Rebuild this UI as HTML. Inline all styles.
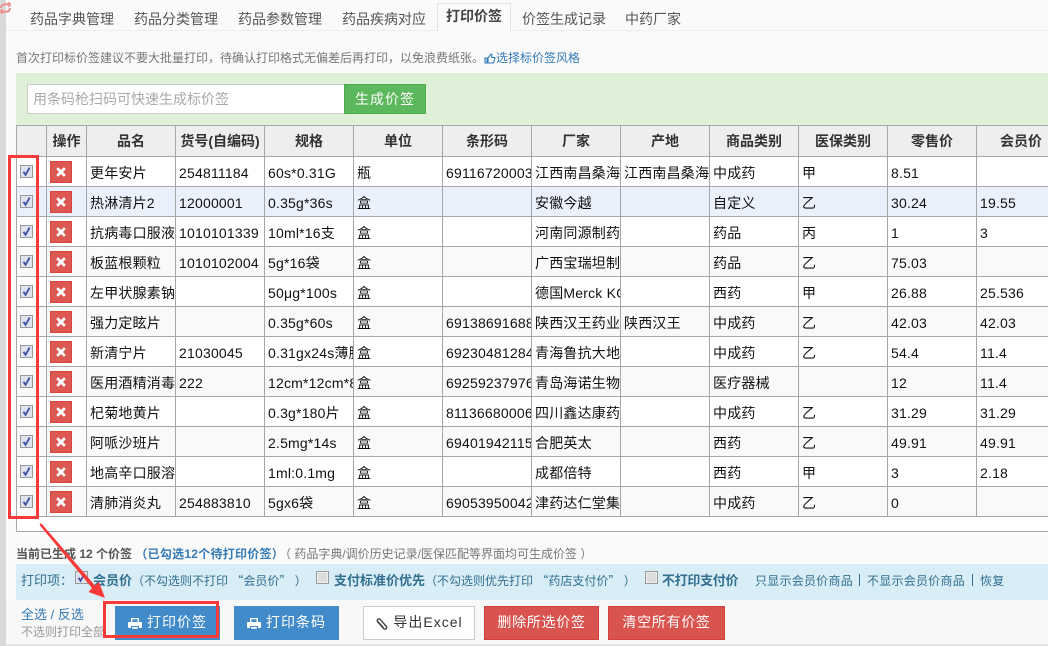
<!DOCTYPE html>
<html lang="zh"><head><meta charset="utf-8"><title>打印价签</title>
<style>
*{box-sizing:border-box}
html,body{margin:0;padding:0}
body{width:1048px;height:646px;overflow:hidden;position:relative;background:#fafafa;font-family:"Liberation Sans","Noto Sans CJK SC",sans-serif;font-size:14px;color:#333}
.a{position:absolute;white-space:nowrap}
.tab{top:9px;height:20px;line-height:20px;font-size:14px;color:#555}
table{position:absolute;left:16px;top:125px;border-collapse:collapse;table-layout:fixed;width:1049px;background:#fff}
th,td{border:1px solid #a6a6a6;overflow:hidden;white-space:nowrap;padding:2px 0 0 3px;font-size:14px;height:30px;text-align:left;color:#111;font-weight:normal;letter-spacing:.2px}
th{height:31px;background:#eee;text-align:center;font-weight:bold;color:#333;padding:0;letter-spacing:0}
tr.s td{background:#f9f9f9}
tr.h td{background:#eaf1fd}
td.c,td.d{padding:0;position:relative}
.cb{position:absolute;left:3px;top:8px;width:13px;height:13px}
.x{position:absolute;left:3px;top:4px;width:22px;height:22px}
.btn{top:606px;height:34px;line-height:33px;text-align:center;font-size:14px;color:#fff}
.lnk{color:#31708f;font-size:12px;letter-spacing:.25px}
.q{font-family:"Noto Sans CJK SC",sans-serif}
</style></head><body>
<svg width="0" height="0" style="position:absolute"><defs>
<symbol id="ck" viewBox="0 0 13 13"><rect x=".5" y=".5" width="12" height="12" fill="#dfe3ee" stroke="#9a9a9a"/><path d="M3.5 6.8L5.6 9.8 9.6 2.6" fill="none" stroke="#3d4f9f" stroke-width="1.8"/></symbol>
<symbol id="ub" viewBox="0 0 13 13"><rect x=".5" y=".5" width="12" height="12" fill="#eee" stroke="#9a9a9a"/><rect x="2" y="2" width="9" height="9" fill="#dcdcdc"/></symbol>
<symbol id="dl" viewBox="0 0 22 22"><rect x=".5" y=".5" width="21" height="21" fill="#dd5753" stroke="#d9443f"/><path d="M8 8L14 14M14 8L8 14" stroke="#fff" stroke-width="2.8" stroke-linecap="round"/></symbol>
<symbol id="pr" viewBox="0 0 14 12"><path d="M3 0h8v4h2.2q.8 0 .8 1v4q0 1-1 1h-2V8H3v2H1q-1 0-1-1V5q0-1 .8-1H3zM4.4 1.3V4h5.2V1.3zM4.2 9h5.6v1.7H4.2z" fill="#fff" fill-rule="evenodd"/></symbol>
</defs></svg>

<div class="a" style="left:0;top:0;width:6px;height:646px;background:#d9d9d9"></div>
<svg class="a" style="left:0;top:2px" width="11" height="12" viewBox="0 0 11 12"><path d="M.8 6Q1.500 2 5.500 2.200H8.500M8 .5L10.500 2.500 8 4.500M10.200 6Q9.500 10 5.500 9.800H2.500M3 7.500L.5 9.500 3 11.500" fill="none" stroke="#ec8f8f" stroke-width="2"/></svg>

<div class="a" style="left:6px;top:30px;width:1042px;height:1px;background:#eee"></div>
<div class="a tab" style="left:30px">药品字典管理</div>
<div class="a tab" style="left:134px">药品分类管理</div>
<div class="a tab" style="left:238px">药品参数管理</div>
<div class="a tab" style="left:342px">药品疾病对应</div>
<div class="a" style="left:437px;top:3px;width:74px;height:28px;background:#fafafa;border:1px solid #e2e2e2;border-bottom:0;text-align:center;line-height:25px;font-weight:bold;color:#444">打印价签</div>
<div class="a tab" style="left:522px">价签生成记录</div>
<div class="a tab" style="left:625px">中药厂家</div>

<div class="a" style="left:16px;top:50px;font-size:12px;line-height:16px;color:#777">首次打印标价签建议不要大批量打印，待确认打印格式无偏差后再打印，以免浪费纸张。</div>
<svg class="a" style="left:484px;top:53px" width="12" height="11" viewBox="0 0 12 11"><path d="M1 5h2v5H1zM4 5l3-4 1 1-.5 2.500H11L9.500 10H4z" fill="none" stroke="#2f7fb8" stroke-width="1.100"/></svg>
<div class="a" style="left:496px;top:50px;font-size:12px;line-height:16px;color:#337ab7">选择标价签风格</div>

<div class="a" style="left:16px;top:73px;width:1032px;height:52px;background:#dff0d8"></div>
<div class="a" style="left:27px;top:84px;width:318px;height:30px;background:#fff;border:1px solid #ccc;line-height:28px;padding-left:5px;color:#a8a8a8">用条码枪扫码可快速生成标价签</div>
<div class="a" style="left:344px;top:84px;width:82px;height:30px;background:#5cb85c;border:1px solid #4cae4c;color:#fff;text-align:center;line-height:28px;letter-spacing:1px">生成价签</div>

<div class="a" style="left:16px;top:125px;width:1032px;height:407px;background:#fff;border-left:1px solid #a6a6a6;border-bottom:1px solid #a6a6a6"></div>
<table>
<colgroup><col style="width:30px"><col style="width:40px"><col style="width:89px"><col style="width:89px"><col style="width:89px"><col style="width:89px"><col style="width:89px"><col style="width:89px"><col style="width:89px"><col style="width:89px"><col style="width:89px"><col style="width:89px"><col style="width:89px"></colgroup>
<tr><th></th><th>操作</th><th>品名</th><th>货号(自编码)</th><th>规格</th><th>单位</th><th>条形码</th><th>厂家</th><th>产地</th><th>商品类别</th><th>医保类别</th><th>零售价</th><th>会员价</th></tr>
<tr><td class="c"><svg class="cb"><use href="#ck"/></svg></td><td class="d"><svg class="x"><use href="#dl"/></svg></td><td>更年安片</td><td>254811184</td><td>60s*0.31G</td><td>瓶</td><td>6911672000383</td><td>江西南昌桑海集团</td><td>江西南昌桑海集团</td><td>中成药</td><td>甲</td><td>8.51</td><td></td></tr>
<tr class="h"><td class="c"><svg class="cb"><use href="#ck"/></svg></td><td class="d"><svg class="x"><use href="#dl"/></svg></td><td>热淋清片2</td><td>12000001</td><td>0.35g*36s</td><td>盒</td><td></td><td>安徽今越</td><td></td><td>自定义</td><td>乙</td><td>30.24</td><td>19.55</td></tr>
<tr><td class="c"><svg class="cb"><use href="#ck"/></svg></td><td class="d"><svg class="x"><use href="#dl"/></svg></td><td>抗病毒口服液</td><td>1010101339</td><td>10ml*16支</td><td>盒</td><td></td><td>河南同源制药有限</td><td></td><td>药品</td><td>丙</td><td>1</td><td>3</td></tr>
<tr class="s"><td class="c"><svg class="cb"><use href="#ck"/></svg></td><td class="d"><svg class="x"><use href="#dl"/></svg></td><td>板蓝根颗粒</td><td>1010102004</td><td>5g*16袋</td><td>盒</td><td></td><td>广西宝瑞坦制药</td><td></td><td>药品</td><td>乙</td><td>75.03</td><td></td></tr>
<tr><td class="c"><svg class="cb"><use href="#ck"/></svg></td><td class="d"><svg class="x"><use href="#dl"/></svg></td><td>左甲状腺素钠</td><td></td><td>50μg*100s</td><td>盒</td><td></td><td>德国Merck KGaA</td><td></td><td>西药</td><td>甲</td><td>26.88</td><td>25.536</td></tr>
<tr class="s"><td class="c"><svg class="cb"><use href="#ck"/></svg></td><td class="d"><svg class="x"><use href="#dl"/></svg></td><td>强力定眩片</td><td></td><td>0.35g*60s</td><td>盒</td><td>6913869168888</td><td>陕西汉王药业有限</td><td>陕西汉王</td><td>中成药</td><td>乙</td><td>42.03</td><td>42.03</td></tr>
<tr><td class="c"><svg class="cb"><use href="#ck"/></svg></td><td class="d"><svg class="x"><use href="#dl"/></svg></td><td>新清宁片</td><td>21030045</td><td>0.31gx24s薄膜衣</td><td>盒</td><td>6923048128400</td><td>青海鲁抗大地药业</td><td></td><td>中成药</td><td>乙</td><td>54.4</td><td>11.4</td></tr>
<tr class="s"><td class="c"><svg class="cb"><use href="#ck"/></svg></td><td class="d"><svg class="x"><use href="#dl"/></svg></td><td>医用酒精消毒片</td><td>222</td><td>12cm*12cm*8</td><td>盒</td><td>6925923797600</td><td>青岛海诺生物工程</td><td></td><td>医疗器械</td><td></td><td>12</td><td>11.4</td></tr>
<tr><td class="c"><svg class="cb"><use href="#ck"/></svg></td><td class="d"><svg class="x"><use href="#dl"/></svg></td><td>杞菊地黄片</td><td></td><td>0.3g*180片</td><td>盒</td><td>8113668000600</td><td>四川鑫达康药业有</td><td></td><td>中成药</td><td>乙</td><td>31.29</td><td>31.29</td></tr>
<tr class="s"><td class="c"><svg class="cb"><use href="#ck"/></svg></td><td class="d"><svg class="x"><use href="#dl"/></svg></td><td>阿哌沙班片</td><td></td><td>2.5mg*14s</td><td>盒</td><td>6940194211500</td><td>合肥英太</td><td></td><td>西药</td><td>乙</td><td>49.91</td><td>49.91</td></tr>
<tr><td class="c"><svg class="cb"><use href="#ck"/></svg></td><td class="d"><svg class="x"><use href="#dl"/></svg></td><td>地高辛口服溶液</td><td></td><td>1ml:0.1mg</td><td>盒</td><td></td><td>成都倍特</td><td></td><td>西药</td><td>甲</td><td>3</td><td>2.18</td></tr>
<tr class="s"><td class="c"><svg class="cb"><use href="#ck"/></svg></td><td class="d"><svg class="x"><use href="#dl"/></svg></td><td>清肺消炎丸</td><td>254883810</td><td>5gx6袋</td><td>盒</td><td>6905395004200</td><td>津药达仁堂集团</td><td></td><td>中成药</td><td>乙</td><td>0</td><td></td></tr>
</table>

<div class="a" style="left:16px;top:546px;font-size:12px;line-height:16px;color:#777"><b style="color:#555">当前已生成 12 个价签</b> <b style="color:#337ab7;letter-spacing:.25px">（已勾选12个待打印价签）</b><span style="margin-left:1px">（ 药品字典/调价历史记录/医保匹配等界面均可生成价签 ）</span></div>

<div class="a" style="left:16px;top:564px;width:1032px;height:36px;background:#d9edf7"></div>
<div class="a" style="left:21px;top:572px;font-size:13px;line-height:17px;color:#31708f">打印项：</div>
<svg class="a" style="left:75px;top:571px" width="13" height="13"><use href="#ck"/></svg>
<div class="a" style="left:93px;top:572px;font-size:12px;line-height:17px;color:#31708f"><b style="font-size:13px">会员价</b>（不勾选则不打印 <span class="q">“</span>会员价<span class="q">”</span> ）</div>
<svg class="a" style="left:316px;top:571px" width="13" height="13"><use href="#ub"/></svg>
<div class="a" style="left:334px;top:572px;font-size:12px;line-height:17px;color:#31708f"><b style="font-size:13px">支付标准价优先</b>（不勾选则优先打印 <span class="q">“</span>药店支付价<span class="q">”</span> ）</div>
<svg class="a" style="left:645px;top:571px" width="13" height="13"><use href="#ub"/></svg>
<div class="a" style="left:662px;top:572px;font-size:13px;line-height:17px;color:#31708f;font-weight:bold;letter-spacing:-.3px">不打印支付价</div>
<div class="a lnk" style="left:755px;top:573px;line-height:17px">只显示会员价商品</div>
<div class="a" style="left:859px;top:574px;width:1px;height:12px;background:#31708f"></div>
<div class="a lnk" style="left:867px;top:573px;line-height:17px">不显示会员价商品</div>
<div class="a" style="left:972px;top:574px;width:1px;height:12px;background:#31708f"></div>
<div class="a lnk" style="left:980px;top:573px;line-height:17px">恢复</div>

<div class="a" style="left:6px;top:600px;width:1042px;height:44px;background:#f8f8f8"></div>
<div class="a" style="left:6px;top:644px;width:1042px;height:2px;background:#e4e4e4"></div>
<div class="a" style="left:21px;top:606px;font-size:13px;line-height:17px;color:#337ab7;text-decoration:none">全选 / 反选</div>
<div class="a" style="left:21px;top:624px;font-size:12px;line-height:16px;color:#999">不选则打印全部</div>

<div class="a btn" style="left:115px;width:105px;background:#428bca;padding-left:19px;letter-spacing:1px">打印价签</div>
<svg class="a" style="left:128px;top:618px" width="14" height="12"><use href="#pr"/></svg>
<div class="a btn" style="left:234px;width:105px;background:#428bca;padding-left:19px;letter-spacing:1px">打印条码</div>
<svg class="a" style="left:247px;top:618px" width="14" height="12"><use href="#pr"/></svg>
<div class="a btn" style="left:363px;width:112px;background:#fff;border:1px solid #ccc;color:#333;padding-left:18px;line-height:31px;letter-spacing:1px">导出Excel</div>
<svg class="a" style="left:375px;top:617px" width="13" height="14" viewBox="0 0 13 14"><path d="M2 4L8.500 11.500Q10 12.800 11.200 11.700 12.300 10.500 11 9L5 2.300Q3.800 1.300 2.800 2.300 1.800 3.300 2.800 4.500L8.500 10.700" fill="none" stroke="#444" stroke-width="1.400"/></svg>
<div class="a btn" style="left:484px;width:115px;background:#d9534f;border:1px solid #d43f3a;line-height:31px;letter-spacing:.7px">删除所选价签</div>
<div class="a btn" style="left:608px;width:117px;background:#d9534f;border:1px solid #d43f3a;line-height:31px;letter-spacing:.7px">清空所有价签</div>

<div class="a" style="left:8px;top:155px;width:31px;height:364px;border:3px solid #f63a3a"></div>
<div class="a" style="left:103px;top:601px;width:116px;height:37px;border:3px solid #f63a3a"></div>
<svg class="a" style="left:0;top:0;pointer-events:none" width="1048" height="646" viewBox="0 0 1048 646"><path d="M41 523L95 585.500 99 582 105 598 88.500 592 92 588 39.500 525z" fill="#f63a3a"/></svg>
</body></html>
